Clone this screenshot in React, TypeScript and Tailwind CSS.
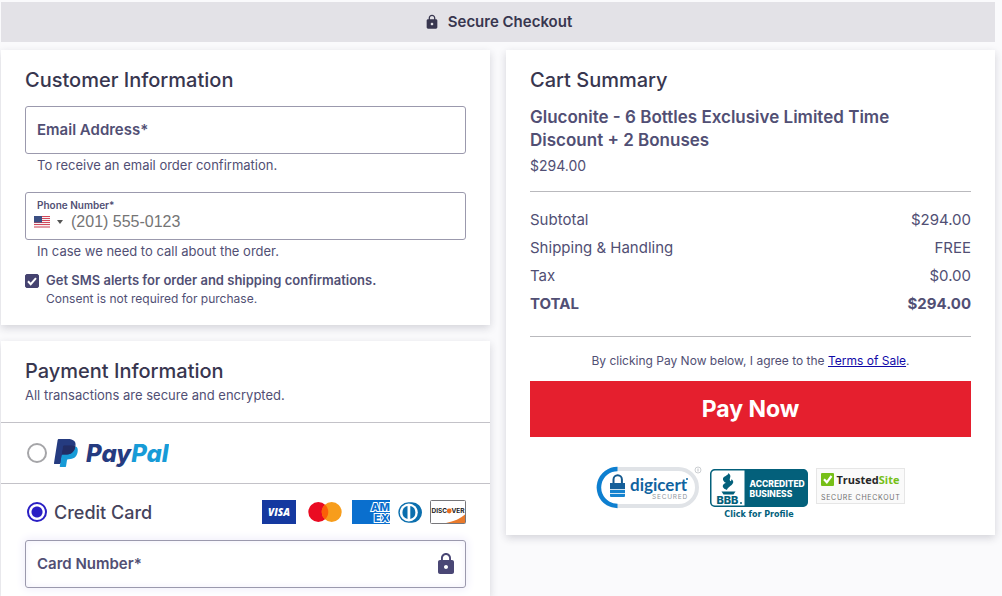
import React, { useState } from "react";
import { MdLock } from "react-icons/md";

const card = "bg-white shadow-[0_3px_8px_rgba(40,40,60,0.18)]";
const heading = "text-[20px] leading-6 font-medium text-[#38364f]";
const field = "rounded-[3px] border border-[#9b99ad]";

function PayPalLogo() {
  return (
    <svg viewBox="0 0 115 30" className="h-[30px] w-[115px]" role="img" aria-label="PayPal">
      <g transform="translate(0 1) scale(0.93)">
        <path fill="#253B80" d="M7.266 29.154l.523-3.322-1.165-.027H1.061L4.927 1.292a.316.316 0 0 1 .314-.268h9.38c3.114 0 5.263.648 6.385 1.927.526.6.861 1.227 1.023 1.917.17.724.173 1.589.007 2.644l-.012.077v.676l.526.298a3.69 3.69 0 0 1 1.065.812c.45.513.741 1.165.864 1.938.127.795.085 1.741-.123 2.812-.24 1.232-.628 2.305-1.152 3.183a6.547 6.547 0 0 1-1.825 2c-.696.494-1.523.869-2.458 1.109-.906.236-1.939.355-3.072.355h-.73c-.522 0-1.029.188-1.427.525a2.21 2.21 0 0 0-.744 1.328l-.055.299-.924 5.855-.042.215c-.011.068-.03.102-.058.125a.155.155 0 0 1-.096.035H7.266z" />
        <path fill="#179BD7" d="M23.048 7.667c-.028.179-.06.362-.096.55-1.237 6.351-5.469 8.545-10.874 8.545H9.326c-.661 0-1.218.48-1.321 1.132L6.596 26.83l-.399 2.533a.704.704 0 0 0 .695.814h4.881c.578 0 1.069-.42 1.16-.99l.048-.248.919-5.832.059-.32c.09-.572.582-.992 1.16-.992h.73c4.729 0 8.431-1.92 9.513-7.476.452-2.321.218-4.259-.978-5.622a4.667 4.667 0 0 0-1.336-1.03z" />
        <path fill="#222D65" d="M21.754 7.151a9.757 9.757 0 0 0-1.203-.267 15.284 15.284 0 0 0-2.426-.177h-7.352a1.172 1.172 0 0 0-1.159.992L8.05 17.605l-.045.289a1.336 1.336 0 0 1 1.321-1.132h2.752c5.405 0 9.637-2.195 10.874-8.545.037-.188.068-.371.096-.55a6.594 6.594 0 0 0-1.017-.429 9.045 9.045 0 0 0-.277-.087z" />
        <path fill="#253B80" d="M9.614 7.699a1.169 1.169 0 0 1 1.159-.991h7.352c.871 0 1.684.057 2.426.177a9.757 9.757 0 0 1 1.481.353c.365.121.704.264 1.017.429.368-2.347-.003-3.945-1.272-5.392C20.378.682 17.853 0 14.622 0h-9.38c-.66 0-1.223.48-1.325 1.133L.01 25.898a.806.806 0 0 0 .795.932h5.791l1.454-9.225 1.564-9.906z" />
      </g>
      <text x="32" y="24" fontFamily="Inter, sans-serif" fontSize="24" fontWeight="800" fontStyle="italic" fill="#253B80">
        Pay<tspan fill="#179BD7">Pal</tspan>
      </text>
    </svg>
  );
}

function UsFlag() {
  return (
    <svg viewBox="0 0 16 12" className="h-3 w-4" aria-hidden="true">
      <rect width="16" height="12" fill="#f6f1f2" />
      <path d="M0 .5h16M0 2.5h16M0 4.5h16M0 6.5h16M0 8.5h16M0 11h16" stroke="#d2485a" strokeWidth="1" />
      <rect width="8" height="6.5" fill="#3b4f83" />
    </svg>
  );
}

function CardBrands() {
  return (
    <div className="flex items-center">
      <svg viewBox="0 0 34 24" className="mr-3 h-6 w-[34px]" role="img" aria-label="Visa">
        <rect width="34" height="24" fill="#1539a0" />
        <text x="17" y="16" textAnchor="middle" fontFamily="Open Sans, sans-serif" fontSize="10" fontWeight="800" fontStyle="italic" fill="#fff">VISA</text>
      </svg>
      <svg viewBox="0 0 34 20" className="mr-[10px] h-5 w-[34px]" role="img" aria-label="Mastercard">
        <circle cx="10.3" cy="10" r="10" fill="#ea0b22" />
        <circle cx="23.7" cy="10" r="10" fill="#f79d1c" />
        <path d="M17 2.6a10 10 0 0 1 0 14.8 10 10 0 0 1 0-14.8z" fill="#fb5f08" />
      </svg>
      <svg viewBox="0 0 38 24" className="mr-2 h-6 w-[38px]" role="img" aria-label="American Express">
        <rect width="38" height="24" fill="#0a6fce" />
        <g fontFamily="Inter, sans-serif" fontSize="11" fontWeight="800" fill="#0a6fce" stroke="#fff" strokeWidth="2" paintOrder="stroke">
          <text x="19" y="11">AM</text>
          <text x="22" y="21.5">EX</text>
        </g>
      </svg>
      <svg viewBox="0 0 24 21" className="mr-2 h-[21px] w-6" role="img" aria-label="Diners Club">
        <path d="M10.500 .3h3.500a10 10.200 0 0 1 0 20.400h-3.500A10.200 10.200 0 0 1 10.500 .3z" fill="#0b6fae" />
        <circle cx="10.800" cy="10.500" r="9" fill="#fff" />
        <path d="M9.500 4a6.700 6.700 0 0 0 0 13zM12.300 4a6.700 6.700 0 0 1 0 13z" fill="#0b6fae" />
      </svg>
      <svg viewBox="0 0 36 24" className="h-6 w-9" role="img" aria-label="Discover">
        <rect x=".5" y=".5" width="35" height="23" rx="1" fill="#fff" stroke="#77777b" />
        <path d="M35 14.500v8.500H16c8-1.500 14.500-4.500 19-8.500z" fill="#e97a2b" />
        <g fontFamily="Inter, sans-serif" fontSize="6.500" fontWeight="700" fill="#1d1b22">
          <text x="1.500" y="13.300">DISC</text>
          <text x="21.500" y="13.300">VER</text>
        </g>
        <circle cx="19.200" cy="11" r="2.400" fill="#ea6d1c" />
      </svg>
    </div>
  );
}

function DigicertBadge() {
  return (
    <svg viewBox="0 0 106 44" className="h-11 w-[106px]" role="img" aria-label="DigiCert Secured">
      <rect x="2.500" y="4" width="98.500" height="37" rx="18.500" fill="#fff" stroke="#e0e3e7" strokeWidth="4" />
      <path d="M21.500 4a18.500 18.500 0 0 0-9.500 34.400q4.500 2.600 9.500 2.600" fill="none" stroke="#0d7fd0" strokeWidth="4.500" />
      <path d="M17.500 18.500v-4a4.200 4.200 0 0 1 8.400 0v4" fill="none" stroke="#14588d" strokeWidth="2" />
      <rect x="14" y="18" width="15" height="14" rx="1" fill="#1583cf" />
      <rect x="14" y="18" width="15" height="6.500" fill="#155f9a" />
      <path d="M14 24.500h15M14 28.500h15" stroke="#fff" strokeWidth=".8" />
      <text x="34" y="26" fontFamily="Lato, sans-serif" fontSize="17" fontWeight="700" fill="#11639f">digicert</text>
      <circle cx="91" cy="14" r="1" fill="#11639f" />
      <text x="56" y="34" fontFamily="Inter, sans-serif" fontSize="6.500" letterSpacing=".8" fill="#8f969d">SECURED</text>
      <circle cx="102" cy="5" r="3" fill="#fff" stroke="#bfc3c8" strokeWidth=".8" />
      <path d="M102 3.500v3" stroke="#bfc3c8" />
    </svg>
  );
}

function BbbBadge() {
  return (
    <svg viewBox="0 0 98 50" className="h-[50px] w-[98px]" role="img" aria-label="BBB Accredited Business">
      <rect x=".7" y=".7" width="96.600" height="36.600" rx="4" fill="#03607b" stroke="#03607b" strokeWidth="1.400" />
      <path d="M5 1.500h29.500v35H5a3.500 3.500 0 0 1-3.500-3.500V5A3.500 3.500 0 0 1 5 1.500z" fill="#fff" />
      <path d="M18.500 4c4.500 4-1 5.500 2.500 9-3.500 3-8.500 0-8-3.500.4-2.300 5-2.800 5.500-5.500z" fill="#03607b" />
      <path d="M21.500 10c5.500 5-3.500 7-4.500 11-4.500-1.500-5.500-4.500-2.500-6.500 3-1.500 7.500-1.500 7-4.500z" fill="#03607b" />
      <path d="M11.500 22.500h14l-2 3h-10z" fill="#03607b" />
      <text x="6.500" y="35" fontFamily="Inter, sans-serif" fontSize="11" fontWeight="800" fill="#03607b">BBB</text>
      <circle cx="31" cy="34" r="1" fill="#03607b" />
      <g fontFamily="Inter, sans-serif" fontSize="8.500" fontWeight="800" fill="#fff">
        <text x="39.500" y="17.500">ACCREDITED</text>
        <text x="39.500" y="27.500">BUSINESS</text>
      </g>
      <text x="49" y="47.500" textAnchor="middle" fontFamily="DejaVu Sans, sans-serif" fontSize="8" fontWeight="700" fill="#03607b">Click for Profile</text>
    </svg>
  );
}

function TrustedSiteBadge() {
  return (
    <svg viewBox="0 0 89 36" className="h-9 w-[89px]" role="img" aria-label="TrustedSite Secure Checkout">
      <rect x=".5" y=".5" width="88" height="35" fill="#fafafa" stroke="#e6e6e6" />
      <rect x="5" y="5" width="13" height="13" rx="1" fill="#76bf17" />
      <path d="M8 11.300l2.800 3L15.500 8" fill="none" stroke="#fff" strokeWidth="2.200" />
      <text x="20.500" y="15.500" fontFamily="Open Sans, sans-serif" fontSize="11" fontWeight="700" fill="#262626">
        Trusted<tspan fill="#76bf17">Site</tspan>
      </text>
      <text x="5" y="31.500" fontFamily="Inter, sans-serif" fontSize="7" letterSpacing=".7" fill="#707070">SECURE CHECKOUT</text>
    </svg>
  );
}

function CustomerInformation() {
  const [sms, setSms] = useState(true);
  return (
    <section className={`${card} px-6 pt-[18px] pb-[17px]`}>
      <h2 className={heading}>Customer Information</h2>
      <label className={`${field} mt-[14px] flex h-12 items-center gap-2 px-[11px]`}>
        <span className="text-[15px] font-semibold">Email Address*</span>
        <input type="email" className="min-w-0 flex-1 bg-transparent outline-none" />
      </label>
      <p className="mt-px pl-3 text-[13px] leading-5">To receive an email order confirmation.</p>

      <div className={`${field} mt-[17px] flex h-12 flex-col pt-[6px]`}>
        <label htmlFor="phone" className="pl-[11px] text-[10px] leading-3 font-semibold">Phone Number*</label>
        <div className="flex items-center pl-2">
          <button type="button" aria-label="Country: United States" className="flex items-center gap-[7px]">
            <UsFlag />
            <svg viewBox="0 0 6 4" className="h-1 w-[6px]" aria-hidden="true">
              <path d="M0 0h6L3 4z" fill="#555" />
            </svg>
          </button>
          <input
            id="phone"
            type="tel"
            placeholder="(201) 555-0123"
            className="ml-2 h-[22px] min-w-0 flex-1 bg-transparent font-['Liberation_Sans',sans-serif] text-[16px] outline-none placeholder:text-[#757575]"
          />
        </div>
      </div>
      <p className="mt-px pl-3 text-[13px] leading-5">In case we need to call about the order.</p>

      <div className="mt-[9px] flex items-start gap-[7px]">
        <span className="relative mt-1 flex size-[14px] shrink-0">
          <input
            id="sms"
            type="checkbox"
            checked={sms}
            onChange={(e) => setSms(e.target.checked)}
            className="peer size-[14px] appearance-none rounded-[2px] border border-[#454370] checked:bg-[#454370]"
          />
          <svg viewBox="0 0 14 14" className="pointer-events-none absolute inset-0 hidden peer-checked:block" aria-hidden="true">
            <path d="M3 7.300l2.700 2.900L11 4.200" fill="none" stroke="#fff" strokeWidth="2" />
          </svg>
        </span>
        <div>
          <label htmlFor="sms" className="block text-[13px] leading-5 font-semibold">
            Get SMS alerts for order and shipping confirmations.
          </label>
          <p className="text-[12px] leading-[18px]">Consent is not required for purchase.</p>
        </div>
      </div>
    </section>
  );
}

function PaymentInformation() {
  const [method, setMethod] = useState("card");
  const radio =
    "size-5 shrink-0 appearance-none rounded-full border-2 border-[#a5a5a8] checked:border-[#2a1fc4] checked:bg-[radial-gradient(circle,#2a1fc4_5px,white_6px)]";
  return (
    <section className={`${card} pt-[18px] pb-2`}>
      <div className="px-6 pb-[17px]">
        <h2 className={heading}>Payment Information</h2>
        <p className="mt-[2px] text-[13px] leading-5">All transactions are secure and encrypted.</p>
      </div>
      <label className="flex h-[61px] items-center gap-[7px] border-t border-[#c3c2c8] px-[26px]">
        <input type="radio" name="method" checked={method === "paypal"} onChange={() => setMethod("paypal")} className={radio} />
        <PayPalLogo />
      </label>
      <div className="flex h-[57px] items-center justify-between border-t border-[#c3c2c8] pr-6 pl-[26px]">
        <label className="flex items-center gap-[7px] text-[18px] font-medium text-[#45435c]">
          <input type="radio" name="method" checked={method === "card"} onChange={() => setMethod("card")} className={radio} />
          Credit Card
        </label>
        <CardBrands />
      </div>
      <div className="px-6">
        <label className={`${field} flex h-12 items-center gap-2 px-[11px] shadow-[0_0_8px_2px_#f1effb,inset_0_0_6px_1px_#f4f2fc]`}>
          <span className="text-[15px] leading-5 font-semibold">Card Number*</span>
          <input type="text" inputMode="numeric" className="min-w-0 flex-1 bg-transparent outline-none" />
          <MdLock className="size-4 scale-150 text-[#4a4775]" aria-hidden="true" />
        </label>
      </div>
    </section>
  );
}

const totals = [
  ["Subtotal", "$294.00"],
  ["Shipping & Handling", "FREE"],
  ["Tax", "$0.00"],
];

function CartSummary() {
  return (
    <section className={`${card} px-6 pt-[18px] pb-4`}>
      <h2 className={heading}>Cart Summary</h2>
      <h3 className="mt-[14px] pr-12 text-[17px] leading-[23px] font-semibold">
        Gluconite - 6 Bottles Exclusive Limited Time Discount + 2 Bonuses
      </h3>
      <p className="mt-1 text-[14px] leading-5">$294.00</p>
      <table className="mt-[15px] w-full border-y border-[#b9b9bd] text-[15px]">
        <tbody>
          <tr className="h-[15px]" aria-hidden="true"><td colSpan={2} /></tr>
          {totals.map(([label, amount]) => (
            <tr key={label} className="h-7">
              <th scope="row" className="text-left font-normal">{label}</th>
              <td className="text-right">{amount}</td>
            </tr>
          ))}
          <tr className="h-7 font-bold">
            <th scope="row" className="text-left">TOTAL</th>
            <td className="text-right">$294.00</td>
          </tr>
          <tr className="h-[18px]" aria-hidden="true"><td colSpan={2} /></tr>
        </tbody>
      </table>
      <p className="mt-[14px] text-center text-[12px] leading-5">
        By clicking Pay Now below, I agree to the{" "}
        <a href="#terms" className="text-[#1109a8] underline">Terms of Sale</a>.
      </p>
      <button type="button" className="mt-[10px] h-14 w-full bg-[#e51f2e] text-[23px] font-bold text-white">
        Pay Now
      </button>
      <div className="mt-7 flex items-start justify-center gap-2">
        <DigicertBadge />
        <a href="#bbb" className="mt-1"><BbbBadge /></a>
        <a href="#trustedsite" className="mt-[3px]"><TrustedSiteBadge /></a>
      </div>
    </section>
  );
}

export default function App() {
  return (
    <div className="bg-[#fafafc] pt-[2px] pr-[7px] pl-px font-[Inter,sans-serif] text-[#514f74]">
      <header className="flex h-10 items-center justify-center gap-2 bg-[#e3e2e7] text-[15px] font-semibold text-[#38364f]">
        <MdLock className="size-4" aria-hidden="true" />
        Secure Checkout
      </header>
      <main className="mt-2 grid grid-cols-2 items-start gap-4">
        <div className="flex flex-col gap-4">
          <CustomerInformation />
          <PaymentInformation />
        </div>
        <CartSummary />
      </main>
    </div>
  );
}
